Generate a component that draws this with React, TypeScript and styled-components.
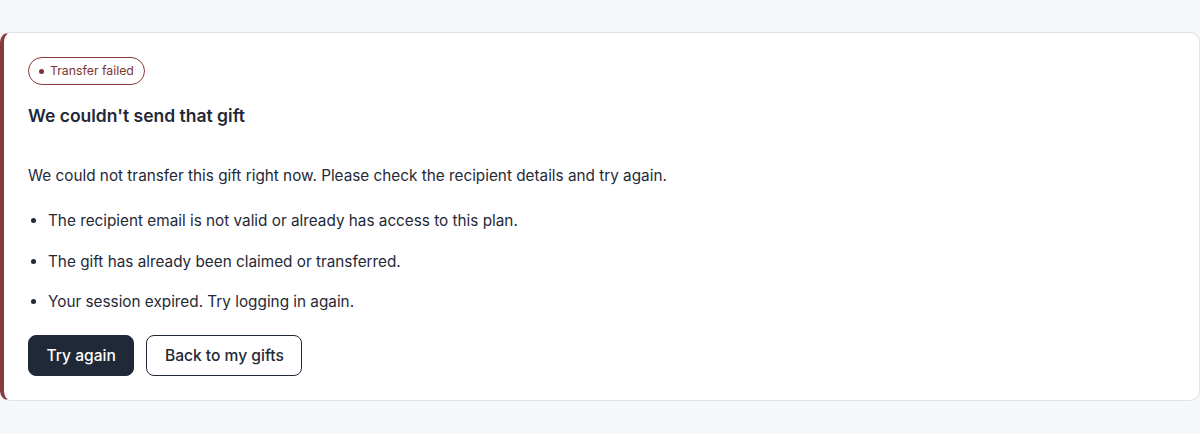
import React from "react";
import styled, { createGlobalStyle } from "styled-components";

const Global = createGlobalStyle`
  html, body { margin: 0; padding: 0; background: #f6f7f9; }
  body { font-family: Inter, "Noto Sans", Arial, sans-serif; color: #1f2937; -webkit-font-smoothing: antialiased; }
`;

const Page = styled.main`
  padding: 32px 0 33px;
  background: #f6f7f9;
`;

const Card = styled.section`
  background: #ffffff;
  border: 1px solid #dfe2e7;
  border-left: 4px solid #8a3a3a;
  border-radius: 10px;
  padding: 24px;
  display: flex;
  flex-direction: column;
  align-items: flex-start;
`;

const Badge = styled.span`
  display: inline-flex;
  align-items: center;
  gap: 6px;
  height: 28px;
  box-sizing: border-box;
  padding: 0 10px;
  border: 1px solid #8a3a3a;
  border-radius: 999px;
  color: #7d3434;
  font-size: 12.3px;
  line-height: 1;
`;

const Dot = styled.span`
  width: 5px;
  height: 5px;
  border-radius: 50%;
  background: #7d3434;
`;

const Title = styled.h2`
  margin: 19px 0 0;
  font-size: 17.5px;
  line-height: 24px;
  font-weight: 600;
  color: #1f2937;
`;

const Message = styled.p`
  margin: 36px 0 0;
  font-size: 15.3px;
  line-height: 24px;
  color: #1f2937;
`;

const Reasons = styled.ul`
  margin: 21px 0 0;
  padding: 0 0 0 20px;
  display: flex;
  flex-direction: column;
  gap: 16.5px;
  font-size: 15.3px;
  line-height: 24px;
  color: #1f2937;
`;

const Reason = styled.li`
  padding-left: 0;
`;

const Actions = styled.div`
  display: flex;
  gap: 12px;
  margin-top: 21px;
`;

const Button = styled.button<{ $primary?: boolean }>`
  height: 41px;
  box-sizing: border-box;
  padding: 0 17.5px;
  border-radius: 8px;
  font-family: inherit;
  font-size: 15.6px;
  font-weight: 500;
  cursor: pointer;
  border: 1px solid #1f2937;
  background: ${(p) => (p.$primary ? "#1f2937" : "#ffffff")};
  color: ${(p) => (p.$primary ? "#ffffff" : "#1f2937")};
`;

export default function App() {
  return (
    <>
      <Global />
      <Page>
        <Card>
          <Badge>
            <Dot />
            Transfer failed
          </Badge>
          <Title>We couldn't send that gift</Title>
          <Message>
            We could not transfer this gift right now. Please check the recipient details and try again.
          </Message>
          <Reasons>
            <Reason>The recipient email is not valid or already has access to this plan.</Reason>
            <Reason>The gift has already been claimed or transferred.</Reason>
            <Reason>Your session expired. Try logging in again.</Reason>
          </Reasons>
          <Actions>
            <Button $primary>Try again</Button>
            <Button>Back to my gifts</Button>
          </Actions>
        </Card>
      </Page>
    </>
  );
}
